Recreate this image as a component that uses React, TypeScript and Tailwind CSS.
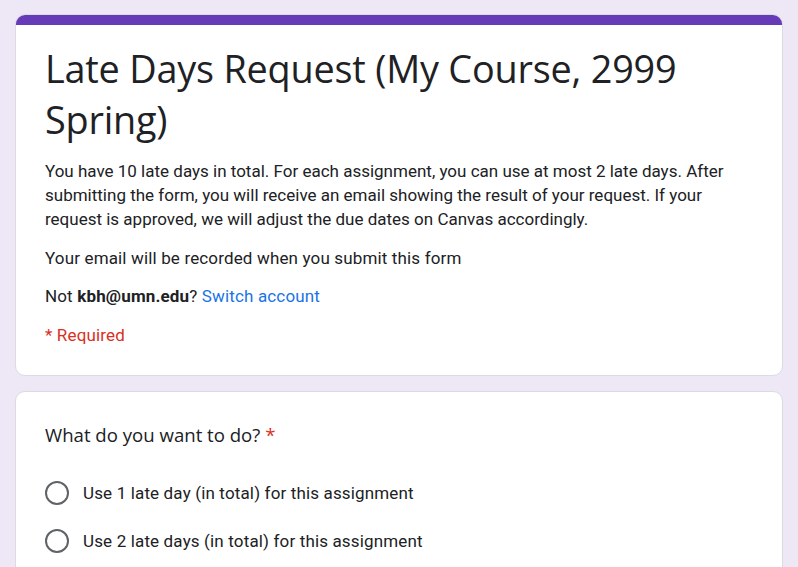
export default function App() {
  return (
    <div className="min-h-screen bg-[#ede7f6] px-[15px] pt-[14px] pb-6 font-['Roboto',sans-serif] text-[#202124]">
      <div className="flex flex-col gap-[15px]">
        {/* Header card */}
        <div className="overflow-hidden rounded-[10px] border border-[#dadce0] bg-white">
          <div className="-mx-px -mt-px h-[11px] bg-[#673ab7]" />
          <div className="px-[29px] pt-[18px] pb-[28px]">
            <h1 className="font-['Open_Sans',sans-serif] text-[37.8px] leading-[51px] font-normal tracking-[-0.2px]">
              Late Days Request (My Course, 2999 Spring)
            </h1>
            <p className="mt-[14px] text-[17px] leading-[24px]">
              You have 10 late days in total. For each assignment, you can use at most 2 late days. After
              submitting the form, you will receive an email showing the result of your request. If your
              request is approved, we will adjust the due dates on Canvas accordingly.
            </p>
            <p className="mt-[15px] text-[17px] leading-[24px] tracking-[0.15px]">
              Your email will be recorded when you submit this form
            </p>
            <p className="mt-[14px] text-[17px] leading-[24px] tracking-[0.15px]">
              Not <span className="font-bold">kbh@umn.edu</span>?{' '}
              <a className="text-[#1a73e8]">Switch account</a>
            </p>
            <p className="mt-[15px] text-[17px] leading-[24px] tracking-[0.15px] text-[#d93025]">* Required</p>
          </div>
        </div>

        {/* Question card */}
        <div className="rounded-[10px] border border-[#dadce0] bg-white px-[29px] pt-[31px] pb-8">
          <div className="font-['Open_Sans',sans-serif] text-[18.6px] leading-[24px]">
            What do you want to do? <span className="text-[#d93025]">*</span>
          </div>
          <div className="mt-[34px] flex flex-col gap-6">
            {['Use 1 late day (in total) for this assignment', 'Use 2 late days (in total) for this assignment'].map((label) => (
              <label key={label} className="flex items-center gap-[14px]">
                <span className="h-6 w-6 rounded-full border-2 border-[#5f6368]" />
                <span className="text-[17px] leading-[24px] tracking-[0.15px]">{label}</span>
              </label>
            ))}
          </div>
        </div>
      </div>
    </div>
  );
}
